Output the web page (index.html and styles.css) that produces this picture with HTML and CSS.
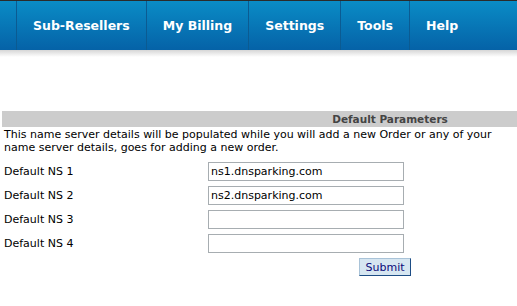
FILE: index.html
```html
<!DOCTYPE html>
<html lang="en">
<head>
    <meta charset="UTF-8">
    <title>Default Parameters</title>
    <link rel="stylesheet" href="styles.css">
</head>
<body>

<div class="topbar">
    <ul class="nav">
        <li>Sub-Resellers</li>
        <li>My Billing</li>
        <li>Settings</li>
        <li>Tools</li>
        <li class="last">Help</li>
    </ul>
</div>
<div class="topbar-shadow"></div>

<form class="params" action="#" method="POST">
    <div class="params-head">Default Parameters</div>
    <p class="intro">This name server details will be populated while you will add a new Order or any of your name server details, goes for adding a new order.</p>

    <div class="field">
        <label for="ns1">Default NS 1</label>
        <input type="text" id="ns1" name="ns1" value="ns1.dnsparking.com">
    </div>
    <div class="field">
        <label for="ns2">Default NS 2</label>
        <input type="text" id="ns2" name="ns2" value="ns2.dnsparking.com">
    </div>
    <div class="field">
        <label for="ns3">Default NS 3</label>
        <input type="text" id="ns3" name="ns3">
    </div>
    <div class="field">
        <label for="ns4">Default NS 4</label>
        <input type="text" id="ns4" name="ns4">
    </div>

    <button type="submit">Submit</button>
</form>

</body>
</html>
```

FILE: styles.css
```css
html, body {
    margin: 0;
    padding: 0;
    overflow: hidden;
}
body {
    font-family: 'DejaVu Sans', Verdana, sans-serif;
    font-size: 11px;
    color: #000;
    background-color: #fff;
}

/* Top navigation */
.topbar {
    height: 49px;
    border-top: 1px solid #2b2b2b;
    background: linear-gradient(#0a8cc6, #0562a7);
}
.nav {
    display: flex;
    height: 100%;
    margin: 0;
    padding: 0 0 0 16px;
    list-style: none;
}
.nav li {
    display: flex;
    align-items: center;
    padding: 0 16px 0 16px;
    border-left: 1px solid #0b5b92;
    color: #fff;
    font-size: 12.5px;
    font-weight: bold;
}
.topbar-shadow {
    height: 7px;
    background: linear-gradient(#d6d6d6, #fff);
}

/* Parameters form */
.params {
    width: 776px;
    margin: 54px 0 0 2px;
}
.params-head {
    height: 16px;
    line-height: 16px;
    background-color: #cccccc;
    color: #444;
    text-align: center;
    font-size: 10.5px;
    font-weight: bold;
}
.intro {
    width: 515px;
    margin: 1px 0 0 2px;
    line-height: 13px;
}
.field {
    display: flex;
    align-items: center;
    height: 19px;
    margin-top: 5px;
    padding-left: 2px;
}
.intro + .field {
    margin-top: 8px;
}
.field label {
    width: 204px;
}
.field input {
    width: 196px;
    height: 19px;
    padding: 0 2px;
    border: 1px solid #a7adb1;
    box-sizing: border-box;
    font-family: 'DejaVu Sans', Verdana, sans-serif;
    font-size: 11px;
    color: #000;
}
button {
    display: block;
    width: 52px;
    height: 18px;
    margin: 5px 0 0 357px;
    padding: 0;
    background-color: #d6e6f1;
    border: 1px solid #a9c3d8;
    border-right-color: #1d4d85;
    border-bottom-color: #1d4d85;
    color: #0b0b7a;
    font-family: 'DejaVu Sans', Verdana, sans-serif;
    font-size: 11px;
}
```
